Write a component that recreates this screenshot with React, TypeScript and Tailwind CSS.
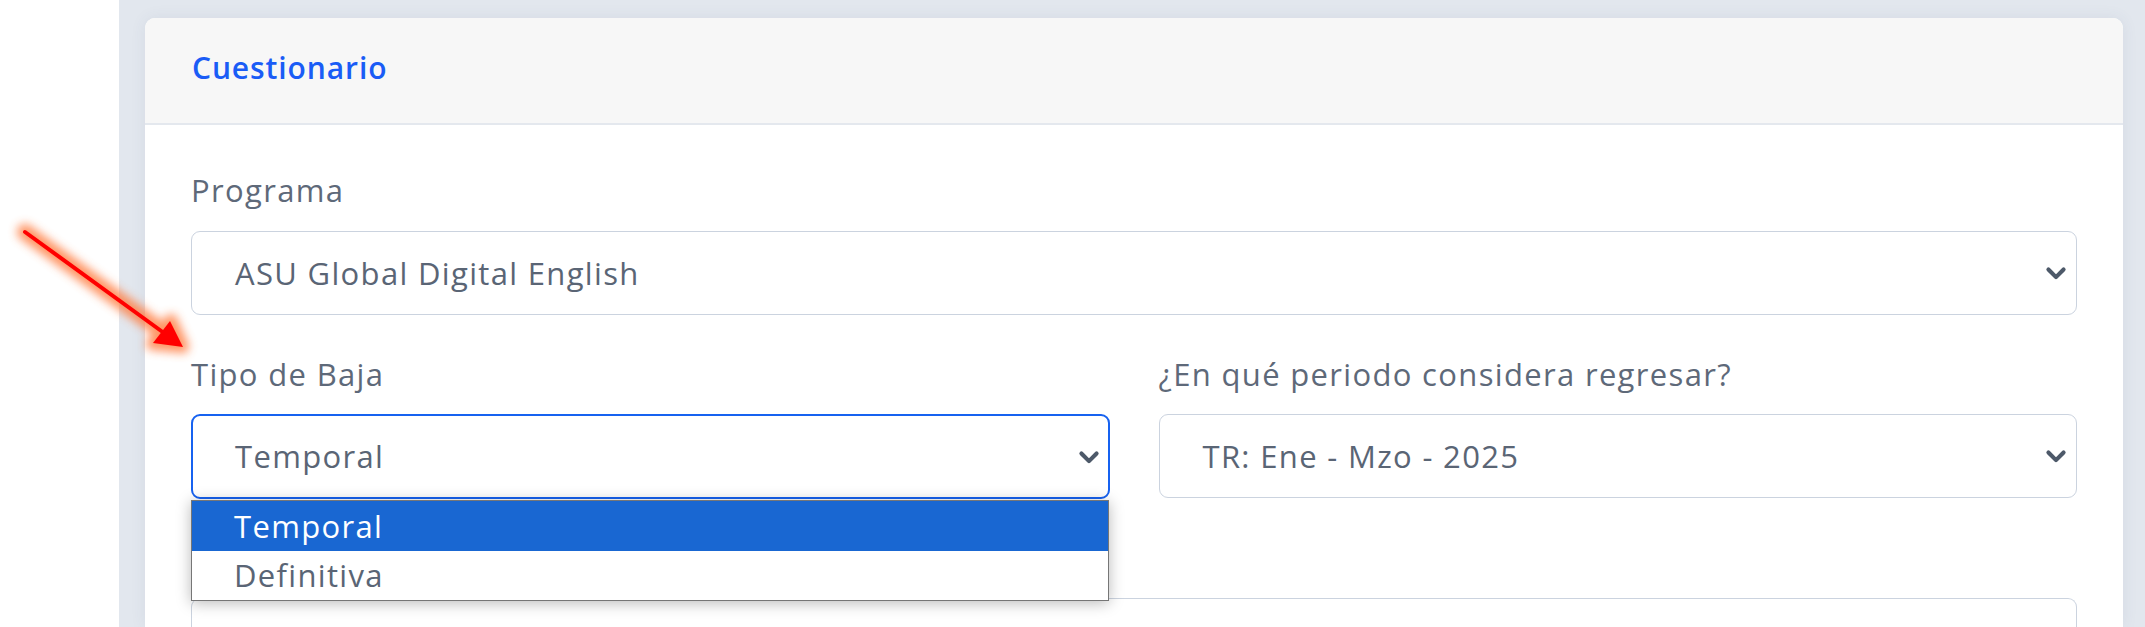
import React from "react";

function Chevron() {
  return (
    <svg width="22" height="22" viewBox="0 0 16 16" className="shrink-0">
      <path d="m2.5 5.5 5.5 5.5 5.5-5.5" fill="none" stroke="#4d5969" strokeWidth="3" strokeLinecap="round" strokeLinejoin="round" />
    </svg>
  );
}

function Select({ value, focused = false }: { value: string; focused?: boolean }) {
  return (
    <div
      className={
        focused
          ? "flex h-[85px] items-center justify-between rounded-[9px] border-2 border-[#1762f0] bg-white pl-[42px] pr-[8px] text-[31px] tracking-[0.043em] text-[#5a6575]"
          : "flex h-[84px] items-center justify-between rounded-[9px] border border-[#cbd3df] bg-white pl-[43px] pr-[9px] text-[31px] tracking-[0.043em] text-[#5a6575]"
      }
    >
      <span>{value}</span>
      <Chevron />
    </div>
  );
}

export default function App() {
  return (
    <div
      className="relative flex h-[627px] w-full overflow-hidden bg-white"
      style={{ fontFamily: '"Open Sans", "Noto Sans", sans-serif' }}
    >
      <div className="w-[119px] shrink-0 bg-white" />
      <div className="flex-1 bg-[#e2e7ee] pl-[26px] pr-[22px] pt-[18px]">
        <div className="h-full rounded-t-[10px] bg-white shadow-[0_0_16px_rgba(60,80,110,0.08)]">
          <div className="flex h-[107px] items-center rounded-t-[10px] border-b-2 border-[#e4e8ee] bg-[#f7f7f7] px-[47px] pb-[6px]">
            <span className="text-[30px] font-semibold tracking-[0.03em] text-[#1a5cf6]">Cuestionario</span>
          </div>
          <div className="px-[46px] pt-[45px]">
            <div className="mb-[21px] text-[31px] leading-[40px] tracking-[0.043em] text-[#5e6979]">Programa</div>
            <Select value="ASU Global Digital English" />
            <div className="mt-[39px] grid grid-cols-2 gap-x-[49px]">
              <div className="relative">
                <div className="mb-[20px] text-[31px] leading-[40px] tracking-[0.043em] text-[#5e6979]">Tipo de Baja</div>
                <Select value="Temporal" focused />
                <div className="absolute left-0 right-[1px] top-[146px] z-10 border border-[#767676] bg-white shadow-[0_2px_14px_rgba(0,0,0,0.28)]">
                  <div className="flex h-[50px] items-center bg-[#1967d2] pl-[42px] text-[31px] tracking-[0.043em] text-white">Temporal</div>
                  <div className="flex h-[49px] items-center pl-[42px] text-[31px] tracking-[0.043em] text-[#5a6575]">Definitiva</div>
                </div>
              </div>
              <div>
                <div className="mb-[20px] text-[31px] leading-[40px] tracking-[0.043em] text-[#5e6979]">¿En qué periodo considera regresar?</div>
                <Select value="TR: Ene - Mzo - 2025" />
              </div>
            </div>
            <div className="mt-[99px] h-[60px] rounded-t-[9px] border border-b-0 border-[#cbd3df]" />
          </div>
        </div>
      </div>
      <svg className="pointer-events-none absolute left-0 top-0" width="260" height="380" viewBox="0 0 260 380">
        <defs>
          <filter id="glow" x="-50%" y="-50%" width="200%" height="200%">
            <feGaussianBlur stdDeviation="5" />
          </filter>
        </defs>
        <g filter="url(#glow)" opacity="0.8">
          <line x1="25" y1="232" x2="166" y2="334" stroke="#ff7a3c" strokeWidth="16" strokeLinecap="round" />
          <polygon points="183,347 152,344 171,320" fill="#ff7a3c" stroke="#ff7a3c" strokeWidth="12" strokeLinejoin="round" />
        </g>
        <line x1="25" y1="232" x2="164" y2="333" stroke="#ff0000" strokeWidth="4" strokeLinecap="round" />
        <polygon points="183,347 153,343 170,321" fill="#ff0000" />
      </svg>
    </div>
  );
}
